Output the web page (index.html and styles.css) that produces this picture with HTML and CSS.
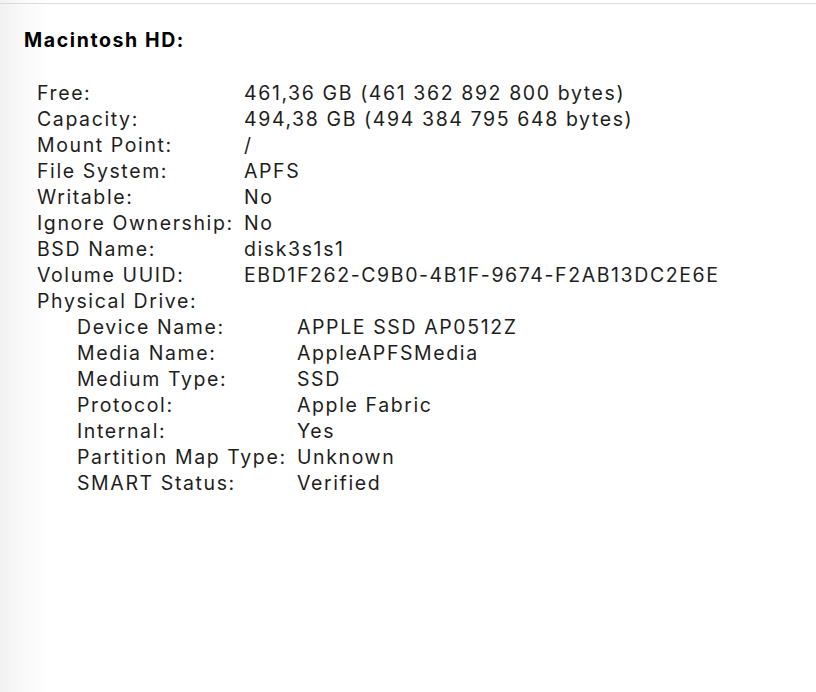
FILE: index.html
```html
<!DOCTYPE html>
<html lang="en">
<head>
    <meta charset="UTF-8">
    <meta name="viewport" content="width=device-width, initial-scale=1.0">
    <title>Macintosh HD</title>
    <link rel="stylesheet" href="styles.css">
</head>
<body>
    <div class="pane">
        <h1 class="title">Macintosh HD:</h1>

        <div class="props">
            <div class="row"><span class="key">Free:</span><span class="val">461,36 GB (461 362 892 800 bytes)</span></div>
            <div class="row"><span class="key">Capacity:</span><span class="val">494,38 GB (494 384 795 648 bytes)</span></div>
            <div class="row"><span class="key">Mount Point:</span><span class="val">/</span></div>
            <div class="row"><span class="key">File System:</span><span class="val">APFS</span></div>
            <div class="row"><span class="key">Writable:</span><span class="val">No</span></div>
            <div class="row"><span class="key">Ignore Ownership:</span><span class="val">No</span></div>
            <div class="row"><span class="key">BSD Name:</span><span class="val">disk3s1s1</span></div>
            <div class="row"><span class="key">Volume UUID:</span><span class="val">EBD1F262-C9B0-4B1F-9674-F2AB13DC2E6E</span></div>
            <div class="row"><span class="key">Physical Drive:</span></div>

            <div class="props nested">
                <div class="row"><span class="key">Device Name:</span><span class="val">APPLE SSD AP0512Z</span></div>
                <div class="row"><span class="key">Media Name:</span><span class="val">AppleAPFSMedia</span></div>
                <div class="row"><span class="key">Medium Type:</span><span class="val">SSD</span></div>
                <div class="row"><span class="key">Protocol:</span><span class="val">Apple Fabric</span></div>
                <div class="row"><span class="key">Internal:</span><span class="val">Yes</span></div>
                <div class="row"><span class="key">Partition Map Type:</span><span class="val">Unknown</span></div>
                <div class="row"><span class="key">SMART Status:</span><span class="val">Verified</span></div>
            </div>
        </div>
    </div>
</body>
</html>
```

FILE: styles.css
```css
html, body {
    height: 100%;
}
body {
    margin: 0;
    font-family: Inter, "Noto Sans", sans-serif;
    color: #1e1e1e;
    background: linear-gradient(to right, #f2f2f2 0, #fbfbfb 30px, #fff 48px);
}
.pane {
    min-height: 100%;
    box-sizing: border-box;
    border-top: 1px solid #dcdcdc;
    margin-top: 3px;
    padding: 22px 0 0 24px;
}
.title {
    margin: 0 0 26px;
    font-size: 19.5px;
    font-weight: 700;
    line-height: 28px;
    letter-spacing: 1.6px;
    color: #000;
}
.props {
    padding-left: 13px;
}
.props.nested {
    padding-left: 40px;
}
.row {
    display: flex;
    font-size: 19.5px;
    line-height: 26px;
    letter-spacing: 1.6px;
}
.key {
    width: 207px;
    flex: none;
    white-space: nowrap;
}
.nested .key {
    width: 220px;
}
.val {
    white-space: nowrap;
}
```
